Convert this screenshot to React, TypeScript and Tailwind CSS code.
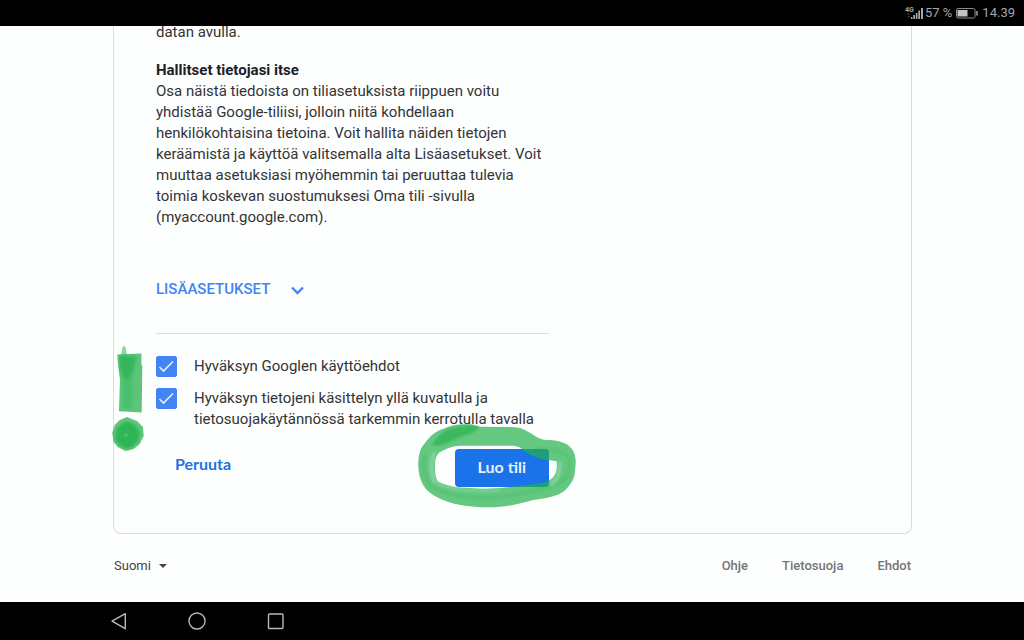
import { useState } from "react";
import type { ReactNode } from "react";

const footerLinks = ["Ohje", "Tietosuoja", "Ehdot"];

function StatusBar() {
  return (
    <header className="relative z-10 flex h-[26px] shrink-0 items-center justify-end bg-black pr-[9px] text-[13px] leading-4 text-[#a6a6a6]">
      <svg className="mr-0.5 h-4 w-5" viewBox="0 0 20 16" fill="currentColor" aria-hidden="true">
        <text x="2" y="7" fontSize="7" fontWeight="700">
          4G
        </text>
        <path d="M4 9.500l1.500-1.500 1.500 1.500zM4 11h3l-1.500 1.500z" opacity=".4" />
        <path d="M8 12H9.500V14H8zM10.300 10h1.700v4h-1.700zM12.800 8h1.700v6h-1.700zM15.300 5.500H17V14h-1.700zM18 3h2v11h-2z" />
      </svg>
      <span>57 %</span>
      <svg className="mx-1 h-3 w-[22px]" viewBox="0 0 22 12" aria-hidden="true">
        <rect x="0.500" y="1.500" width="18.500" height="9.500" rx="1.500" fill="none" stroke="#8a8a8a" />
        <rect x="1.500" y="3" width="10" height="6.500" fill="#c4c4c4" />
        <path d="M21 4v4.500" stroke="#a6a6a6" strokeWidth="1.500" />
      </svg>
      <span>14.39</span>
    </header>
  );
}

function Consent({ id, children }: { id: string; children: ReactNode }) {
  const [checked, setChecked] = useState(true);

  return (
    <div className="flex items-start gap-[17px]">
      <span className="relative h-[21px] w-[21px] shrink-0">
        <input
          id={id}
          type="checkbox"
          checked={checked}
          onChange={(e) => setChecked(e.target.checked)}
          className="block h-full w-full appearance-none rounded-xs border border-[#4285f4] checked:bg-[#4285f4]"
        />
        {checked && (
          <svg className="pointer-events-none absolute inset-0" viewBox="0 0 21 21" fill="none" stroke="#e8f0fe" aria-hidden="true">
            <path d="M3.500 11l4 4L17 5.500" strokeWidth="1.700" />
          </svg>
        )}
      </span>
      <label htmlFor={id}>{children}</label>
    </div>
  );
}

// Hand-drawn marker: exclamation mark
function MarkerExclamation() {
  return (
    <svg className="pointer-events-none absolute -top-[11px] -left-[45px] h-[110px] w-9" viewBox="112 345 36 110" aria-hidden="true">
      <filter id="mark-soft" x="-30%" y="-30%" width="160%" height="160%">
        <feGaussianBlur stdDeviation="1.500" />
      </filter>
      <path d="M122 355C123 351 123 346 125 346c2 0 2 4 3 9z" fill="#22b14c" opacity=".5" />
      <path d="M118.300 354.500L142.500 353.500 142.300 364 143.300 366 142.700 412.500 120 411.200 121 380 119.500 368z" fill="#22b14c" opacity=".74" />
      <g filter="url(#mark-soft)" fill="#22b14c">
        <path d="M120 356h17l-2 12-4 10-6 1-4-10z" opacity=".7" />
        <path d="M124 378h9v30h-9z" opacity=".3" />
      </g>
      <path d="M128 417l10 4 6 6 .700 9-4 8-6 5-8 2-8-4-4-5-1.500-9 2.500-8 5-5z" fill="#22b14c" opacity=".72" />
      <path d="M127 421l8 3 6 8-2 9-6 6-6 2-7-4-4-6 1-9 4-5z" fill="#22b14c" opacity=".8" filter="url(#mark-soft)" />
      <path d="M125 437l2-3 2 2" fill="none" stroke="#8fdaa4" strokeWidth="1.200" opacity=".5" />
    </svg>
  );
}

// Hand-drawn marker: ring round the submit button
function MarkerRing() {
  return (
    <svg className="pointer-events-none absolute -top-[29px] -left-10 h-[90px] w-[165px] max-w-none" viewBox="415 420 165 90" aria-hidden="true">
      <filter id="ring-soft" x="-20%" y="-20%" width="140%" height="140%">
        <feGaussianBlur stdDeviation="1.200" />
      </filter>
      <path
        fillRule="evenodd"
        fill="#22b14c"
        opacity=".7"
        d="M418.300 467C418 456 420 448 425 443C431 435 436 431 443 429C451 425 459 424 467 424.300C473 424 477 426 480 426.700L508 427C517 427 522 428 528 431.700C536 436 539 440 547 440C555 440 560 441 567 444.300C573 449 576 454 575.700 463C575 472 575 477 571.700 482C567 489 563 493 557 495C548 498 541 499 533 500C522 503 511 506 500 506.700C487 508 478 507 467 506C458 505 450 503 443 500C436 497 431 494 426.700 490C421 483 419 476 418.300 467Z
        M435 467C435 460 436 455 440 452C447 448 453 446 460 445.700L513 445.700C519 446 522 449 527 452.700C532 456 537 458 543 459.300L556.700 461.300C557 465 557 469 556 472C554 477 552 479 548 481C538 484 527 485 517 486C505 488 494 488.700 483 488.700L457 487.300C450 486 444 484 438 481.700C435 477 435 472 435 467Z"
      />
      <g filter="url(#ring-soft)">
        <path d="M432 445C438 434 447 429 456 427C464 425 472 425 479 427C475 434 464 435 456 439C448 442 441 448 432 445Z" fill="#22b14c" opacity=".65" />
        <g fill="none" stroke="#22b14c" strokeLinecap="round">
          <path d="M425 455C422 465 424 476 431 485C446 496 475 500 500 497C528 492 550 490 563 479" strokeWidth="4" opacity=".2" />
          <path d="M535 448C548 450 560 448 568 457C571 467 569 475 563 482" strokeWidth="3" opacity=".2" />
        </g>
        <g fill="none" stroke="#fff" strokeLinecap="round">
          <path d="M434 454C430 464 431 475 435 482" strokeWidth="4" opacity=".2" />
          <path d="M560 463C560 472 558 479 552 484" strokeWidth="3" opacity=".25" />
          <path d="M438 484C452 490 480 492 500 490" strokeWidth="2" opacity=".2" />
        </g>
      </g>
    </svg>
  );
}

function NavigationBar() {
  return (
    <nav aria-label="Järjestelmä" className="flex h-[38px] shrink-0 items-center gap-[59px] bg-black pl-[109px]">
      <button type="button" aria-label="Takaisin" className="h-5 w-5">
        <svg viewBox="0 0 20 20" fill="none" stroke="#b8b8b8" strokeWidth="1.400" strokeLinejoin="round">
          <path d="M16.300 2.700v15L3 10.200z" />
        </svg>
      </button>
      <button type="button" aria-label="Aloitusnäyttö" className="h-5 w-5">
        <svg viewBox="0 0 20 20" fill="none" stroke="#b8b8b8" strokeWidth="1.400">
          <circle cx="9" cy="10" r="8" />
        </svg>
      </button>
      <button type="button" aria-label="Viimeisimmät" className="h-5 w-5">
        <svg viewBox="0 0 20 20" fill="none" stroke="#b8b8b8" strokeWidth="1.400">
          <rect x="1.500" y="3" width="14.500" height="14.500" rx="1" />
        </svg>
      </button>
    </nav>
  );
}

export default function App() {
  return (
    <div className="flex min-h-screen flex-col bg-[#fdfefe] font-['Roboto',sans-serif] text-[15px] leading-[21px] text-[#333436]">
      <StatusBar />

      <main className="-mt-1 mr-[112px] ml-[113px] rounded-b-lg border border-t-0 border-[#dadce0] pr-10 pb-[46px] pl-[42px]">
        <div className="max-w-[393px]">
          <p>datan avulla.</p>

          <h2 className="mt-[17px] font-bold text-[#202124]">Hallitset tietojasi itse</h2>
          <p>
            Osa näistä tiedoista on tiliasetuksista riippuen voitu yhdistää Google-tiliisi, jolloin niitä kohdellaan
            henkilökohtaisina tietoina. Voit hallita näiden tietojen keräämistä ja käyttöä valitsemalla alta
            Lisäasetukset. Voit muuttaa asetuksiasi myöhemmin tai peruuttaa tulevia toimia koskevan suostumuksesi Oma
            tili -sivulla (myaccount.google.com).
          </p>

          <button type="button" className="mt-[51px] flex items-center gap-5 font-medium text-[#4285f4]">
            LISÄASETUKSET
            <svg className="mt-0.5 h-4 w-4" viewBox="0 0 16 16" fill="none" stroke="currentColor" strokeWidth="2.400" aria-hidden="true">
              <path d="M2 4.500l5.500 5.500 5.500-5.500" />
            </svg>
          </button>

          <hr className="mt-[33px] border-[#dadce0]" />

          <div className="relative mt-[22px] space-y-[11px]">
            <Consent id="terms">Hyväksyn Googlen käyttöehdot</Consent>
            <Consent id="privacy">
              Hyväksyn tietojeni käsittelyn yllä kuvatulla ja tietosuojakäytännössä tarkemmin kerrotulla tavalla
            </Consent>
            <MarkerExclamation />
          </div>

          <div className="mt-[19px] flex items-start justify-between pl-[19px] font-['Lato',sans-serif] text-[16px] font-bold">
            <button type="button" className="pt-1 text-[#1a73e8]">
              Peruuta
            </button>
            <div className="relative">
              <button type="button" className="h-[38px] rounded-sm bg-[#1a73e8] px-[23px] pb-1 text-[#e8f0fe]">
                Luo tili
              </button>
              <MarkerRing />
            </div>
          </div>
        </div>
      </main>

      <footer className="mr-[113px] ml-[113px] flex items-center justify-between pt-[21px] pb-6 text-[13px] font-medium text-[#757575]">
        <div className="relative">
          <select
            id="language"
            aria-label="Kieli"
            className="h-[21px] w-[55px] appearance-none pl-px font-normal text-[#444]"
          >
            <option>Suomi</option>
          </select>
          <svg className="pointer-events-none absolute top-2 right-0 h-1.5 w-2.5" viewBox="0 0 10 6" fill="#444" aria-hidden="true">
            <path d="M1 1h8L5 5z" />
          </svg>
        </div>
        <div className="flex gap-[34px]">
          {footerLinks.map((link) => (
            <a key={link} href="#">
              {link}
            </a>
          ))}
        </div>
      </footer>

      <div className="mt-auto">
        <NavigationBar />
      </div>
    </div>
  );
}
